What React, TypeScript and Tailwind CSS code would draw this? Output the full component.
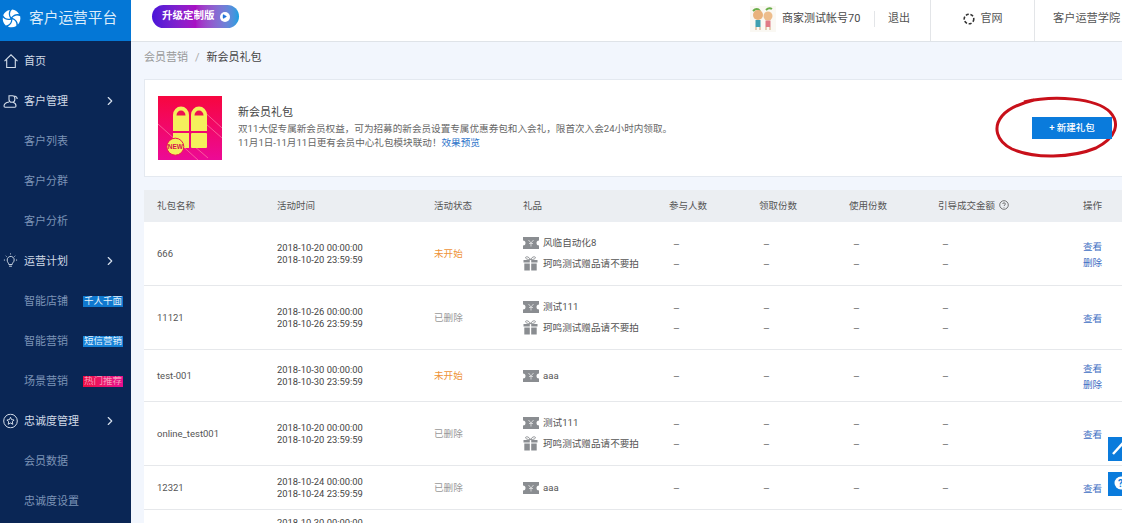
import React from "react";
import { ChevronRight, Play } from "lucide-react";

const font = { fontFamily: 'Roboto, "Noto Sans CJK SC", "Noto Sans", sans-serif' };

function Logo() {
  return (
    <svg width="19" height="19" viewBox="0 0 20 20" fill="#fff" className="shrink-0">
      {[0, 72, 144, 216, 288].map((a) => (
        <path key={a} transform={`rotate(${a} 10 10)`} d="M9.600 8.800C7.900 6.400 8 3 10.600 .6c3.300.3 6 2.200 7.400 4.900-3-.7-6 .4-8.400 3.300z" />
      ))}
    </svg>
  );
}

function HomeIcon() {
  return (
    <svg width="16" height="16" viewBox="0 0 16 16" fill="none" stroke="#d5deea" strokeWidth="1.100">
      <path d="M1.500 8.200 8 1.800l6.500 6.400M3.700 6.500v8h8.600v-8" />
    </svg>
  );
}
function UsersIcon() {
  return (
    <svg width="16" height="16" viewBox="0 0 16 16" fill="none" stroke="#d5deea" strokeWidth="1.100">
      <path d="M6 2.700h3.500c1.500 0 2.300 1 2.300 2.300v1.500c0 1.600-1.200 2.800-2.800 2.800S6 8.100 6 6.500z" />
      <path d="M6 9c-2.600.4-4.800 1.700-5 4 0 .7.500 1.200 1.200 1.200h9.600c.7 0 1.200-.5 1.200-1.200 0-1.800-1.200-3.100-3-3.700M11.500 3c1.500.3 2.700 1.200 2.700 3" />
    </svg>
  );
}
function BulbIcon() {
  return (
    <svg width="18" height="18" viewBox="0 0 18 18" fill="none" stroke="#d5deea" strokeWidth="1">
      <path d="M5.500 8a3.700 3.700 0 1 1 7 1.500c-.6 1-1.500 1.500-1.700 3.200H7.200C7 11 5.500 10.200 5.500 8zM7.500 14.500h3M9 1v1M2 8h1.200M14.800 8H16M4 3.500l.8.800M13.200 4.300l.8-.8" />
    </svg>
  );
}
function StarCircle() {
  return (
    <svg width="15" height="15" viewBox="0 0 15 15" fill="none" stroke="#d5deea" strokeWidth="1">
      <circle cx="7.500" cy="7.500" r="6.800" />
      <path d="m7.500 3.800 1.100 2.400 2.500.3-1.800 1.800.5 2.500-2.300-1.300-2.300 1.300.5-2.500-1.800-1.800 2.500-.3z" />
    </svg>
  );
}

function Ticket() {
  return (
    <svg width="16" height="12" viewBox="0 0 16 12" className="shrink-0">
      <path d="M0 0h16v3.500a2.500 2.500 0 0 0 0 5V12H0V8.500a2.500 2.500 0 0 0 0-5z" fill="#8a8d91" />
      <path d="M5.500 3 8 6l2.500-3M8 6v3.500M6 6.500h4" stroke="#d9dadb" strokeWidth="0.900" fill="none" />
    </svg>
  );
}
function Gift() {
  return (
    <svg width="15" height="15" viewBox="0 0 15 15" className="shrink-0">
      <path d="M7.500 3.600C6 .8 3.800.3 2.800 1.100c-.9 1 .6 2.500 4.700 2.500zM7.500 3.600C9 .8 11.200.3 12.200 1.100c.9 1-.6 2.500-4.700 2.500z" fill="none" stroke="#8a8d91" strokeWidth="0.900" />
      <rect x="0.500" y="4" width="6.300" height="2.500" fill="#8a8d91" />
      <rect x="8.200" y="4" width="6.300" height="2.500" fill="#8a8d91" />
      <rect x="1.300" y="7.500" width="5.500" height="7" fill="#8a8d91" />
      <rect x="8.200" y="7.500" width="5.500" height="7" fill="#8a8d91" />
    </svg>
  );
}

function GiftArt() {
  return (
    <svg width="64" height="64" viewBox="0 0 64 64" className="shrink-0">
      <defs>
        <linearGradient id="gb" x1="0" y1="0" x2="0" y2="1">
          <stop offset="0" stopColor="#f7063f" />
          <stop offset="1" stopColor="#ec0a96" />
        </linearGradient>
      </defs>
      <rect width="64" height="64" fill="url(#gb)" />
      <g stroke="#fb6fa0" strokeWidth="0.800">
        <path d="M0 28 40 64M42 12 64 32M48 28 64 42M36 50 50 62" />
      </g>
      <path d="M15 35V19a8 8.500 0 0 1 16 0v16zM33 35V19a8 8.500 0 0 1 16 0v16z" fill="#f4ef5c" />
      <path d="M18.500 19.500a4.500 5 0 0 1 9 0zM36.500 19.500a4.500 5 0 0 1 9 0z" fill="#ee1150" />
      <rect x="15" y="37" width="16" height="15" fill="#f4ef5c" />
      <rect x="33" y="37" width="16" height="15" rx="1" fill="#f4ef5c" />
      <circle cx="17.300" cy="50.700" r="8.500" fill="#f4ef5c" stroke="#e8174f" strokeWidth="1" />
      <text x="17.300" y="53" textAnchor="middle" fontSize="6.500" fontWeight="700" fill="#d5114f" style={{ fontFamily: '"Liberation Sans", sans-serif' }}>NEW</text>
    </svg>
  );
}

function Avatar() {
  return (
    <svg width="26" height="26" viewBox="0 0 26 26" className="shrink-0">
      <rect width="26" height="26" fill="#faf8f3" />
      <path d="M3 5q4-4 7 0M16 4q3-3 6-1" stroke="#6aae4a" strokeWidth="2" fill="none" />
      <circle cx="8" cy="9" r="5" fill="#e9b27c" />
      <circle cx="18" cy="10" r="4.500" fill="#edbd8c" />
      <rect x="5.500" y="14" width="5" height="7" fill="#3f9fb0" />
      <rect x="15.500" y="14.500" width="5" height="6.500" fill="#e07a86" />
      <path d="M6 21v3M10 21v3M16 21v3M20 21v3" stroke="#d7b48c" strokeWidth="1.200" />
    </svg>
  );
}

const nav: { label: string; icon?: React.ReactNode; arrow?: boolean; tag?: string; tagClass?: string }[] = [
  { label: "首页", icon: <HomeIcon /> },
  { label: "客户管理", icon: <UsersIcon />, arrow: true },
  { label: "客户列表" },
  { label: "客户分群" },
  { label: "客户分析" },
  { label: "运营计划", icon: <BulbIcon />, arrow: true },
  { label: "智能店铺", tag: "千人千面", tagClass: "bg-[#0f78cf] text-[#e6f2fb]" },
  { label: "智能营销", tag: "短信营销", tagClass: "bg-[#1682d8] text-[#e6f2fb]" },
  { label: "场景营销", tag: "热门推荐", tagClass: "bg-gradient-to-r from-[#ee0b3f] to-[#e60d8f] text-[#f59ab8]" },
  { label: "忠诚度管理", icon: <StarCircle />, arrow: true },
  { label: "会员数据" },
  { label: "忠诚度设置" },
];

function Sidebar() {
  return (
    <aside className="w-[131px] shrink-0 bg-[#0a2655] flex flex-col">
      <div className="h-[41px] bg-[#0477d6] flex items-center pl-[2px] gap-[8px] shrink-0 pb-[5px]">
        <Logo />
        <span className="text-[14.700px] text-[#dcecfa]">客户运营平台</span>
      </div>
      {nav.map((n) => (
        <div key={n.label} className="h-[40px] shrink-0 flex items-center relative pl-[24px]">
          {n.icon && <span className="absolute left-[2px] top-1/2 -translate-y-1/2 flex w-[17px] justify-center">{n.icon}</span>}
          <span className={`text-[11px] leading-[14px] pt-[2px] ${n.icon ? "text-[#d0d9e6]" : "text-[#7c93b5]"}`}>{n.label}</span>
          {n.arrow && <ChevronRight size={14} strokeWidth={2} className="absolute left-[103px] text-[#d5deea]" />}
          {n.tag && (
            <span className={`absolute left-[83px] w-[40px] h-[11px] flex items-center justify-center text-[9.500px] leading-none ${n.tagClass}`}>{n.tag}</span>
          )}
        </div>
      ))}
    </aside>
  );
}

function Header() {
  return (
    <header className="h-[42px] shrink-0 bg-white border-b border-[#dfe3e8] flex items-stretch">
      <div className="pl-[21px] flex items-start pt-[5px] w-[619px] shrink-0">
        <div className="w-[87px] h-[23px] rounded-full bg-gradient-to-r from-[#4a12d8] via-[#a80fc4] to-[#0a9fe0] flex items-center pl-[10px] gap-[5px]">
          <span className="text-[10.500px] font-bold text-white leading-none">升级定制版</span>
          <span className="w-[10px] h-[10px] rounded-full bg-white flex items-center justify-center">
            <Play size={5} fill="#1a6fd8" stroke="#1a6fd8" />
          </span>
        </div>
      </div>
      <div className="flex items-center pb-[3px]">
        <Avatar />
        <span className="ml-[6px] text-[11px] text-[#4a4a4a] w-[79px] whitespace-nowrap">商家测试帐号70</span>
        <span className="ml-[13px] w-px h-[16px] bg-[#e3e5e8]" />
        <span className="ml-[13px] text-[11px] text-[#555] w-[22px] whitespace-nowrap">退出</span>
      </div>
      <div className="ml-[20px] w-[105px] border-l border-r border-[#e3e5e8] flex items-center justify-center gap-[6px] pb-[3px]">
        <svg width="12" height="12" viewBox="0 0 12 12" fill="none" stroke="#333" strokeWidth="1.600" strokeDasharray="3 1.700">
          <circle cx="6" cy="6" r="4.800" />
        </svg>
        <span className="text-[11px] text-[#555]">官网</span>
      </div>
      <span className="ml-[18px] text-[11.200px] text-[#555] self-center whitespace-nowrap pb-[3px]">客户运营学院</span>
    </header>
  );
}

const cols = "grid grid-cols-[120px_157px_89px_146px_90px_90px_89px_145px_60px] pl-[13px] items-center";

type Row = { name: string; date: string; status: "未开始" | "已删除"; gift: string; second?: boolean; del?: boolean; h: string };

const rows: Row[] = [
  { name: "666", date: "2018-10-20", status: "未开始", gift: "风临自动化8", second: true, del: true, h: "h-[64px]" },
  { name: "11121", date: "2018-10-26", status: "已删除", gift: "测试111", second: true, h: "h-[64px]" },
  { name: "test-001", date: "2018-10-30", status: "未开始", gift: "aaa", del: true, h: "h-[52px]" },
  { name: "online_test001", date: "2018-10-20", status: "已删除", gift: "测试111", second: true, h: "h-[64px]" },
  { name: "12321", date: "2018-10-24", status: "已删除", gift: "aaa", h: "h-[44px]" },
];

function Dashes({ two }: { two?: boolean }) {
  return (
    <div className="flex flex-col gap-[10px] text-[#777] text-[10.500px] leading-[10px] pl-[4px] pt-[2px]">
      <span>–</span>
      {two && <span>–</span>}
    </div>
  );
}

function DataRow({ r }: { r: Row }) {
  return (
    <div className={`${cols} ${r.h} border-b border-[#e6e8eb] text-[9.600px] text-[#555] bg-white`}>
      <span className="text-[9.500px] leading-[12px] pt-[1px]">{r.name}</span>
      <div className="text-[9.400px] leading-[12px] text-[#444] pt-[1px]">
        <div>{r.date} 00:00:00</div>
        <div>{r.date} 23:59:59</div>
      </div>
      <span className={`leading-[14px] pt-[1px] ${r.status === "未开始" ? "text-[#ee9238]" : "text-[#999]"}`}>{r.status}</span>
      <div className="flex flex-col gap-[7px]">
        <div className="flex items-center gap-[4px] h-[13px]">
          <Ticket />
          <span className="leading-[13px]">{r.gift}</span>
        </div>
        {r.second && (
          <div className="flex items-center gap-[5px] h-[15px]">
            <Gift />
            <span className="leading-[13px]">珂鸣测试赠品请不要拍</span>
          </div>
        )}
      </div>
      <Dashes two={r.second} />
      <Dashes two={r.second} />
      <Dashes two={r.second} />
      <Dashes two={r.second} />
      <div className="flex flex-col gap-[4px] text-[#3f6fc4] leading-[12px] pt-[2px]">
        <span>查看</span>
        {r.del && <span>删除</span>}
      </div>
    </div>
  );
}

export default function App() {
  return (
    <div className="w-[1122px] h-[523px] overflow-hidden flex relative bg-[#f2f6fd]" style={font}>
      <Sidebar />
      <main className="flex-1 min-w-0 flex flex-col overflow-hidden">
        <Header />
        <div className="pl-[13px] flex flex-col w-[1100px]">
          <div className="h-[37px] flex items-center text-[11px] shrink-0 pb-[5px]">
            <span className="text-[#999]">会员营销</span>
            <span className="text-[#aaa] mx-[7px]">/</span>
            <span className="text-[#444]">新会员礼包</span>
          </div>
          <section className="h-[98px] shrink-0 bg-white border border-[#e4e9f0] flex items-center pl-[13px]">
            <GiftArt />
            <div className="ml-[16px] flex flex-col pb-[1px]">
              <span className="text-[11px] text-[#444] leading-[14px] mb-[2px]">新会员礼包</span>
              <span className="text-[9.600px] text-[#666] leading-[14px]">双11大促专属新会员权益，可为招募的新会员设置专属优惠券包和入会礼，限首次入会24小时内领取。</span>
              <span className="text-[9.600px] text-[#666] leading-[14px]">
                11月1日-11月11日更有会员中心礼包模块联动！<span className="text-[#2c74c9]">效果预览</span>
              </span>
            </div>
          </section>
          <div className="mt-[13px] flex flex-col">
            <div className={`${cols} h-[32px] bg-[#ebeef2] text-[9.500px] leading-[13px] text-[#555] pb-[2px]`}>
              <span>礼包名称</span>
              <span>活动时间</span>
              <span>活动状态</span>
              <span>礼品</span>
              <span>参与人数</span>
              <span>领取份数</span>
              <span>使用份数</span>
              <span className="flex items-center gap-[4px]">
                引导成交金额
                <svg width="10" height="10" viewBox="0 0 10 10" fill="none" stroke="#555" strokeWidth="0.800">
                  <circle cx="5" cy="5" r="4.300" />
                  <path d="M3.700 4c0-1.600 2.700-1.600 2.700 0 0 1-1.400 1-1.400 2M5 7v.6" />
                </svg>
              </span>
              <span>操作</span>
            </div>
            {rows.map((r) => (
              <DataRow key={r.name} r={r} />
            ))}
            <div className={`${cols} h-[20px] bg-white items-start`}>
              <span />
              <div className="text-[9.400px] leading-[12px] text-[#444] pt-[7px]">2018-10-30 00:00:00</div>
            </div>
          </div>
        </div>
      </main>
      <svg width="126" height="66" viewBox="0 0 126 66" className="absolute left-[994px] top-[95px] pointer-events-none" fill="none">
        <path d="M30 7C60 0 102 3 116 17c10 11 7 25-14 36-24 10-62 11-84 1C2 46-1 32 8 21 14 14 24 9 40 5" stroke="#c8101a" strokeWidth="3" />
      </svg>
      <button className="absolute left-[1032px] top-[117px] w-[80px] h-[22px] bg-[#0a7bdc] text-white text-[9.500px] leading-[13px] font-medium flex items-center justify-center pb-[1px]">+ 新建礼包</button>
      <div className="absolute left-[1108px] top-[437px] w-[14px] h-[24px] bg-[#0a7bdc] overflow-hidden">
        <svg width="14" height="24" viewBox="0 0 14 24" fill="none" stroke="#fff" strokeWidth="2.400">
          <path d="M5 17 15 6" />
        </svg>
      </div>
      <div className="absolute left-[1108px] top-[472px] w-[14px] h-[24px] bg-[#0a7bdc] overflow-hidden">
        <svg width="14" height="24" viewBox="0 0 14 24">
          <circle cx="13" cy="11" r="6.500" fill="#fff" />
          <text x="10" y="14.500" fontSize="10" fontWeight="700" fill="#0a7bdc" style={{ fontFamily: "Roboto, sans-serif" }}>?</text>
        </svg>
      </div>
    </div>
  );
}
